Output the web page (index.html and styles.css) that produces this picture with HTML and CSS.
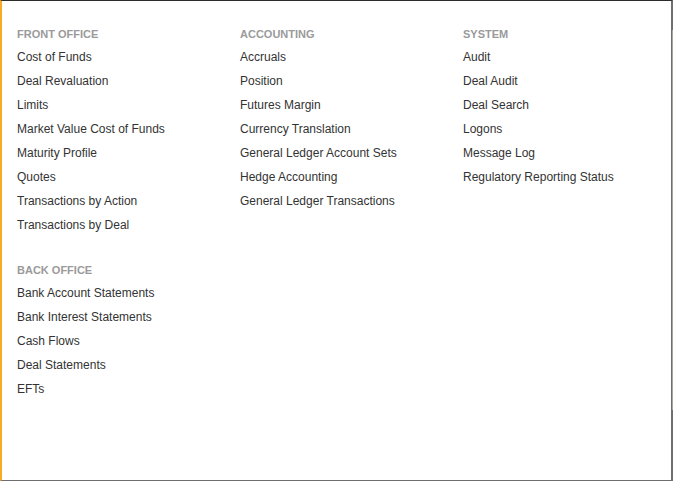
FILE: index.html
```html
<!DOCTYPE html>
<html>
<head>
<meta charset="utf-8">
<link rel="stylesheet" href="styles.css">
</head>
<body>
<div class="panel">
  <div class="col">
    <div class="group">
      <div class="heading">Front Office</div>
      <ul class="links">
        <li>Cost of Funds</li>
        <li>Deal Revaluation</li>
        <li>Limits</li>
        <li>Market Value Cost of Funds</li>
        <li>Maturity Profile</li>
        <li>Quotes</li>
        <li>Transactions by Action</li>
        <li>Transactions by Deal</li>
      </ul>
    </div>
    <div class="group">
      <div class="heading">Back Office</div>
      <ul class="links">
        <li>Bank Account Statements</li>
        <li>Bank Interest Statements</li>
        <li>Cash Flows</li>
        <li>Deal Statements</li>
        <li>EFTs</li>
      </ul>
    </div>
  </div>
  <div class="col">
    <div class="group">
      <div class="heading">Accounting</div>
      <ul class="links">
        <li>Accruals</li>
        <li>Position</li>
        <li>Futures Margin</li>
        <li>Currency Translation</li>
        <li>General Ledger Account Sets</li>
        <li>Hedge Accounting</li>
        <li>General Ledger Transactions</li>
      </ul>
    </div>
  </div>
  <div class="col">
    <div class="group">
      <div class="heading">System</div>
      <ul class="links">
        <li>Audit</li>
        <li>Deal Audit</li>
        <li>Deal Search</li>
        <li>Logons</li>
        <li>Message Log</li>
        <li>Regulatory Reporting Status</li>
      </ul>
    </div>
  </div>
  <div class="scroll-track"></div>
</div>
</body>
</html>
```

FILE: styles.css
```css
html, body {
  margin: 0;
  padding: 0;
  background: #ffffff;
}
.panel {
  position: relative;
  box-sizing: border-box;
  width: 673px;
  height: 481px;
  border-top: 1px solid #2b2b2b;
  border-left: 2px solid #f7aa28;
  border-bottom: 1px solid #6e6e6e;
  border-right: 2px solid #6f6f6f;
  padding: 22px 0 0 15px;
  display: flex;
  font-family: "Liberation Sans", Arial, sans-serif;
  background: #ffffff;
}
.col {
  flex: 0 0 223px;
  width: 223px;
  display: flex;
  flex-direction: column;
  gap: 22px;
}
.heading {
  font-size: 11px;
  font-weight: bold;
  text-transform: uppercase;
  color: #9a9a9a;
  line-height: 22px;
  height: 22px;
}
.links {
  list-style: none;
  margin: 0;
  padding: 0;
}
.links li {
  font-size: 12px;
  line-height: 24px;
  height: 24px;
  color: #333333;
  white-space: nowrap;
}
.scroll-track {
  position: absolute;
  right: -2px;
  top: 29px;
  width: 1px;
  height: 380px;
  background: #aaa49e;
}
```
